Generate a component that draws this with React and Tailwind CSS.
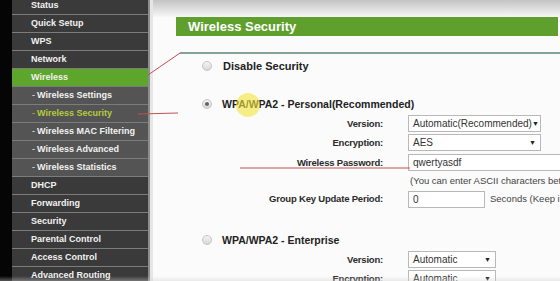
import React from "react";

const main = "bg-[#3a3a3a]";
const sub = "bg-[#545454]";

const items = [
  { t: "Status", k: "m" },
  { t: "Quick Setup", k: "m" },
  { t: "WPS", k: "m" },
  { t: "Network", k: "m" },
  { t: "Wireless", k: "g" },
  { t: "Wireless Settings", k: "s" },
  { t: "Wireless Security", k: "a" },
  { t: "Wireless MAC Filtering", k: "s" },
  { t: "Wireless Advanced", k: "s" },
  { t: "Wireless Statistics", k: "s" },
  { t: "DHCP", k: "m" },
  { t: "Forwarding", k: "m" },
  { t: "Security", k: "m" },
  { t: "Parental Control", k: "m" },
  { t: "Access Control", k: "m" },
  { t: "Advanced Routing", k: "m" },
];

function Row({ t, k }) {
  const isSub = k === "s" || k === "a";
  const bg = k === "g" ? "bg-[#5ea52c]" : isSub ? sub : main;
  const color = k === "a" ? "text-[#b5cc3c]" : "text-[#f2f2f2]";
  return (
    <div className={`h-[18px] shrink-0 border-b border-[#7c7c7c] flex items-center whitespace-nowrap ${bg}`}>
      {isSub ? (
        <span className={`pl-[20px] text-[9px] font-bold ${color}`}>
          <span className="font-normal mr-[2px]">-</span>{t}
        </span>
      ) : (
        <span className={`pl-[19px] text-[9px] font-bold ${color}`}>{t}</span>
      )}
    </div>
  );
}

function Radio({ checked }) {
  return (
    <div className="w-[10px] h-[10px] rounded-full border border-[#c4c4c4] bg-gradient-to-b from-[#f4f4f4] to-[#d8d8d8] flex items-center justify-center">
      {checked && <div className="w-[4px] h-[4px] rounded-full bg-[#666]" />}
    </div>
  );
}

function Label({ children }) {
  return (
    <div className="w-[231px] shrink-0 text-right text-[9.5px] tracking-[-0.2px] font-bold text-[#2a2a2a] pr-[1px] whitespace-nowrap">
      {children}
    </div>
  );
}

function Select({ value, w }) {
  return (
    <div className={`${w} h-[17px] ml-[24px] shrink-0 border border-[#b8b8b8] bg-white flex items-center justify-between px-[4px] text-[10px] text-[#333] whitespace-nowrap`}>
      <span>{value}</span>
      <span className="text-[7px] text-[#222]">▼</span>
    </div>
  );
}

function Input({ value, w }) {
  return (
    <div className={`${w} h-[17px] ml-[24px] border border-[#b8b8b8] bg-white flex items-center px-[4px] text-[10px] text-[#333] shrink-0`}>
      {value}
    </div>
  );
}

export default function App() {
  return (
    <div
      className="relative w-[560px] h-[281px] overflow-hidden flex bg-[#fbfbfb]"
      style={{ fontFamily: '"Liberation Sans", Arial, sans-serif' }}
    >
      <div className="w-[12px] shrink-0 bg-[#050505]" />
      <div className="w-[136px] shrink-0 bg-[#3a3a3a] flex flex-col -mt-[3px]">
        {items.map((it) => (
          <Row key={it.t} {...it} />
        ))}
      </div>
      <div className="w-[2px] shrink-0 bg-[#8e8e8e]" />
      <div className="w-[3px] shrink-0 bg-[#e6e6e6]" />
      <div className="flex-1 flex flex-col min-w-0">
        <div className="h-[17px] shrink-0 bg-gradient-to-b from-[#c4c4c4] to-[#f7f7f7]" />
        <div className="ml-[23px] mr-[2px] h-[19px] shrink-0 bg-[#5f9f2e] flex items-center pl-[12px] text-[13px] font-bold text-white">
          Wireless Security
        </div>
        <div className="ml-[27px] mt-[16px] h-[2px] shrink-0 bg-[#86a39a]" />
        <div className="ml-[49px] mt-[4px] flex items-center gap-[11px]">
          <Radio />
          <span className="text-[11px] font-bold text-[#222]">Disable Security</span>
        </div>
        <div className="ml-[49px] mt-[22px] flex items-center gap-[10px]">
          <Radio checked />
          <span className="text-[10.5px] font-bold text-[#222]">WPA/WPA2 - Personal(Recommended)</span>
        </div>
        <div className="mt-[3px] flex items-center">
          <Label>Version:</Label>
          <Select value="Automatic(Recommended)" w="w-[133px]" />
        </div>
        <div className="mt-[2px] flex items-center">
          <Label>Encryption:</Label>
          <Select value="AES" w="w-[133px]" />
        </div>
        <div className="mt-[3px] flex items-center">
          <Label>Wireless Password:</Label>
          <Input value="qwertyasdf" w="w-[160px]" />
        </div>
        <div className="mt-[3px] ml-[257px] text-[9.5px] text-[#444] whitespace-nowrap h-[18px] flex items-center">
          (You can enter ASCII characters between 8 and 63)
        </div>
        <div className="mt-[2px] flex items-center whitespace-nowrap">
          <Label>Group Key Update Period:</Label>
          <Input value="0" w="w-[77px]" />
          <span className="ml-[5px] text-[9.5px] text-[#444]">Seconds (Keep it default)</span>
        </div>
        <div className="ml-[49px] mt-[25px] flex items-center gap-[10px]">
          <Radio />
          <span className="text-[10.5px] font-bold text-[#222]">WPA/WPA2 - Enterprise</span>
        </div>
        <div className="mt-[3px] flex items-center">
          <Label>Version:</Label>
          <Select value="Automatic" w="w-[88px]" />
        </div>
        <div className="mt-[2px] flex items-center">
          <Label>Encryption:</Label>
          <Select value="Automatic" w="w-[88px]" />
        </div>
      </div>
      <div className="absolute left-[236px] top-[93px] w-[24px] h-[24px] rounded-full bg-[#f5e43a] opacity-60 pointer-events-none" />
      <svg className="absolute inset-0 pointer-events-none" width="560" height="281">
        <line x1="148" y1="75" x2="180" y2="53" stroke="#c0504d" strokeWidth="1" />
        <line x1="138" y1="114" x2="178" y2="113" stroke="#c0504d" strokeWidth="1" />
        <line x1="240" y1="168" x2="410" y2="168" stroke="#c0504d" strokeWidth="1" />
      </svg>
      <div className="absolute left-0 right-0 bottom-0 h-[5px] bg-gradient-to-b from-transparent to-[#d0d0d0] opacity-40 pointer-events-none" />
    </div>
  );
}
